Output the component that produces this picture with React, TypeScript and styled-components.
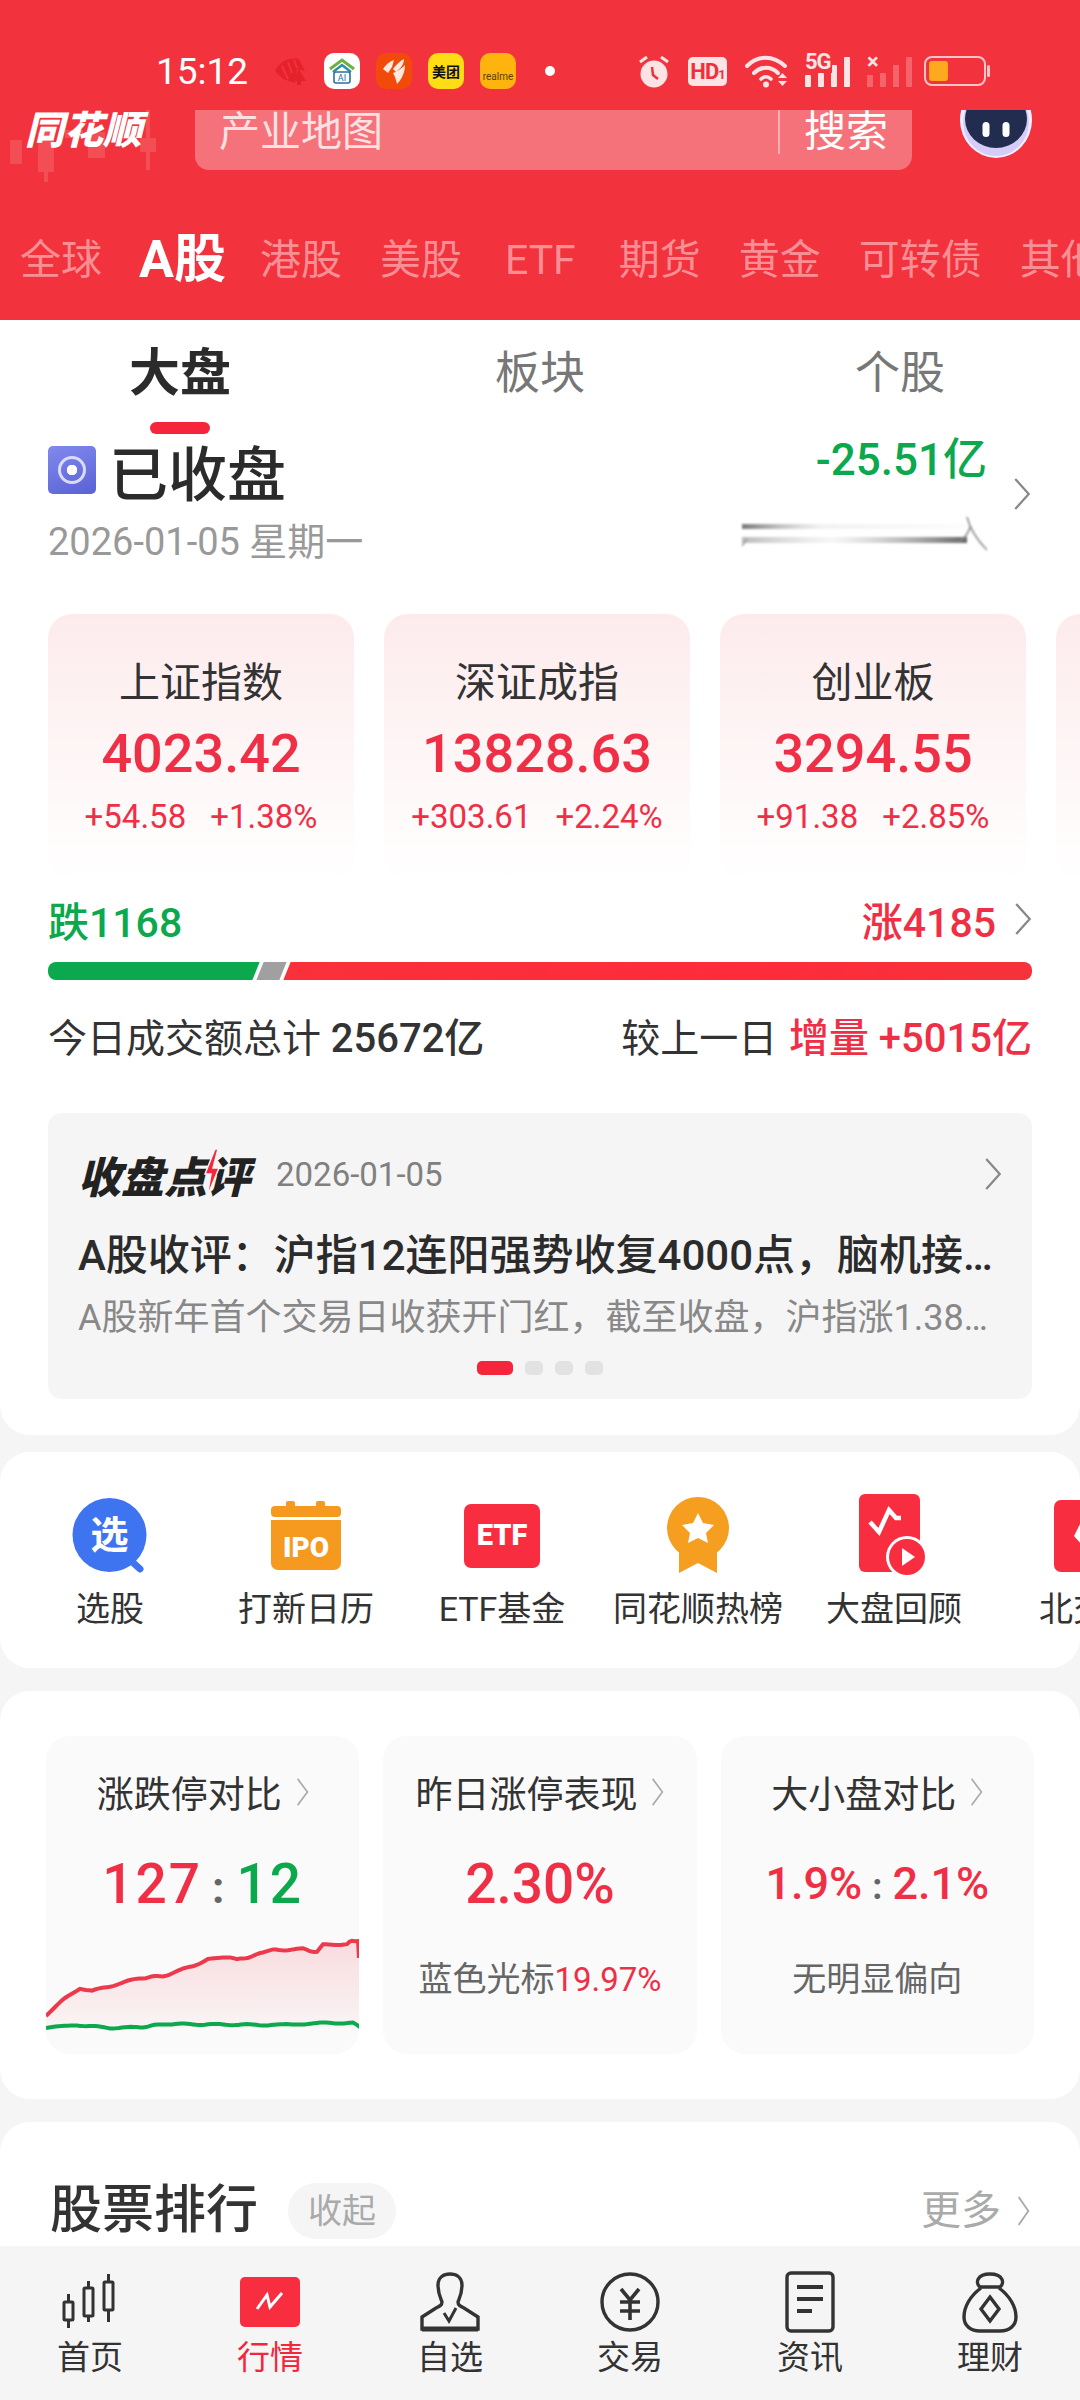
import React from "react";
import styled, { createGlobalStyle } from "styled-components";

const RED = "#EF2F45";
const GREEN = "#0CA84E";
const FONT = `Roboto, "Noto Sans CJK SC", sans-serif`;

const GlobalStyle = createGlobalStyle`
  html, body {
    margin: 0;
    padding: 0;
    background: #f5f5f5;
  }
  * {
    box-sizing: border-box;
  }
`;

// hand-tuned points of the two lines, the wobble is added on top
const wobble = (pts: number[][], amp: number) => {
  const out: string[] = [];
  for (let i = 0; i < pts.length - 1; i++) {
    const [x1, y1] = pts[i];
    const [x2, y2] = pts[i + 1];
    const steps = Math.max(1, Math.round((x2 - x1) / 3));
    for (let s = 0; s < steps; s++) {
      const t = s / steps;
      const n = Math.sin((x1 + t * (x2 - x1)) * 1.9) * amp;
      out.push(`${(x1 + t * (x2 - x1)).toFixed(1)},${(y1 + t * (y2 - y1) + n).toFixed(1)}`);
    }
  }
  const last = pts[pts.length - 1];
  out.push(`${last[0]},${last[1]}`);
  return out.join(" L");
};

const redLine = wobble(
  [[0, 80], [16, 65], [34, 52], [46, 55], [94, 42], [117, 40], [147, 30], [162, 23], [184, 22], [191, 24], [217, 17], [227, 14], [257, 13], [271, 16], [277, 9], [301, 8], [306, 5], [312, 5]],
  0.8
);
const greenLine = wobble(
  [[0, 92], [31, 89], [64, 92], [97, 91], [117, 88], [231, 89], [277, 87], [307, 87], [314, 91]],
  0.6
);

const Chevron: React.FC<{ w?: number; h?: number; color?: string }> = ({ w = 18, h = 32, color = "#888" }) => (
  <svg width={w} height={h} viewBox="0 0 16 30" fill="none" preserveAspectRatio="none" style={{ flexShrink: 0 }}>
    <polyline points="2,1 14,15 2,29" stroke={color} strokeWidth="2" />
  </svg>
);

const RedNotice = () => (
  <svg width="36" height="28" viewBox="0 0 34 28">
    <path d="M2 14 C6 5 16 0 26 2 L32 14 L24 12 L22 26 L10 22 L2 14Z" fill="#E5222C" />
    <path d="M9 9 L15 22 M15 5 L19 16 M21 3 L24 11" stroke="#F2323C" strokeWidth="2" />
    <path d="M26 12 L33 24 H28 V28 H24 V24 H19Z" fill="#E5222C" />
  </svg>
);

const HomeAi = () => (
  <svg width="28" height="28" viewBox="0 0 28 28" fill="none">
    <path d="M2 12 L14 3 L26 12" stroke="#6BB33C" strokeWidth="3" />
    <path d="M5 15 L14 8 L23 15" stroke="#2E8FA8" strokeWidth="2.5" />
    <rect x="6" y="15" width="16" height="11" rx="2" stroke="#2E6F9E" strokeWidth="1.6" />
    <text x="14" y="24" fontSize="9" fontFamily="Roboto" fill="#1F6FA8" textAnchor="middle">AI</text>
  </svg>
);

const Sail = () => (
  <svg width="26" height="28" viewBox="0 0 26 28" fill="#FFE9DF">
    <path d="M2 12 C6 6 10 4 13 3 L11 10 L7 16Z" />
    <path d="M12 12 C15 8 19 4 23 2 C23 7 20 11 15 15Z" />
    <path d="M12 16 C16 15 21 11 24 8 C24 15 21 22 16 27 C15 23 14 19 12 16Z" />
  </svg>
);

const Alarm = () => (
  <svg width="32" height="33" viewBox="0 0 32 33">
    <circle cx="16" cy="19" r="13.5" fill="#FDE3E4" />
    <path d="M2 7 L9 2 M30 7 L23 2" stroke="#FDE3E4" strokeWidth="3" />
    <path d="M14 12 L15 20 L20 24" stroke="#EF2F3A" strokeWidth="2.4" fill="none" />
  </svg>
);

const Wifi = () => (
  <svg width="46" height="33" viewBox="0 0 46 33" fill="none" stroke="#FDE3E4" strokeLinecap="round">
    <path d="M2 11 C13 0 28 0 40 11" strokeWidth="4" />
    <path d="M9 18 C16 11 26 11 33 18" strokeWidth="4" />
    <path d="M16 24 C19 21 23 21 26 24" strokeWidth="3.6" />
    <circle cx="21" cy="29.5" r="3" fill="#FDE3E4" stroke="none" />
    <path d="M33 23 L37.500 18 L42 23Z M33 26 L37.500 31 L42 26Z" fill="#FDE3E4" stroke="none" />
  </svg>
);

const SignalBars: React.FC<{ muted?: boolean }> = ({ muted }) => (
  <svg width="46" height="31" viewBox="0 0 46 31" fill="#FDE3E4" opacity={muted ? 0.28 : 1}>
    <rect x="0" y="19" width="6" height="12" rx="1" />
    <rect x="13" y="17" width="6" height="14" rx="1" />
    <rect x="26" y="9" width="6" height="22" rx="1" />
    <rect x="39" y="1" width="6" height="30" rx="1" />
  </svg>
);

const Robot = () => (
  <svg width="72" height="48" viewBox="0 0 72 48" style={{ display: "block" }}>
    <ellipse cx="36" cy="10" rx="36" ry="38" fill="#F3EEFF" />
    <ellipse cx="36" cy="12" rx="33" ry="34" fill="#C9BDF5" opacity="0.7" />
    <ellipse cx="36" cy="9" rx="31" ry="29" fill="#222C4F" />
    <rect x="22.500" y="12" width="7" height="15" rx="3.500" fill="#fff" />
    <rect x="42.500" y="12" width="7" height="15" rx="3.500" fill="#fff" />
  </svg>
);

const LogoCandles = () => (
  <svg width="170" height="80" viewBox="0 0 170 80" fill="#fff" opacity="0.13">
    <rect x="0" y="30" width="12" height="24" />
    <rect x="28" y="22" width="16" height="40" />
    <rect x="34" y="62" width="4" height="10" />
    <rect x="55" y="20" width="18" height="8" />
    <rect x="78" y="22" width="17" height="26" />
    <rect x="136" y="0" width="4" height="60" />
    <rect x="130" y="28" width="16" height="14" />
  </svg>
);

const PickIcon = () => (
  <svg width="76" height="76" viewBox="0 0 76 76">
    <path d="M56 60 L68 71" stroke="#3F74F0" strokeWidth="7" strokeLinecap="round" />
    <circle cx="37.500" cy="37" r="37" fill="#3F74F0" />
    <text x="37.500" y="50" fontSize="38" fontWeight="700" fontFamily='"Noto Sans CJK SC"' fill="#fff" textAnchor="middle">选</text>
  </svg>
);

const IpoIcon = () => (
  <svg width="70" height="70" viewBox="0 0 70 70">
    <rect x="15" y="0" width="9" height="8" rx="2" fill="#F59A1F" />
    <rect x="45" y="0" width="9" height="8" rx="2" fill="#F59A1F" />
    <rect x="0" y="5" width="70" height="11" rx="4" fill="#F59A1F" />
    <path d="M0 19 H70 V62 A7 7 0 0 1 63 69 H7 A7 7 0 0 1 0 62Z" fill="#F59A1F" />
    <text x="35" y="56" fontSize="28" fontWeight="900" fontFamily="Roboto" fill="#fff" textAnchor="middle">IPO</text>
  </svg>
);

const EtfIcon = () => (
  <svg width="76" height="64" viewBox="0 0 76 64">
    <rect width="76" height="64" rx="7" fill="#F92D40" />
    <text x="38" y="41" fontSize="29" fontWeight="900" fontFamily="Roboto" fill="#fff" textAnchor="middle">ETF</text>
  </svg>
);

const MedalIcon = () => (
  <svg width="62" height="78" viewBox="0 0 62 78">
    <path d="M12 50 V76 L31 66 L50 76 V50Z" fill="#F59E1F" />
    <circle cx="31" cy="31" r="31" fill="#F59E1F" />
    <path d="M31 16 L36 26 L47 28 L39 36 L41 46 L31 41 L21 46 L23 36 L15 28 L26 26Z" fill="#fff" />
  </svg>
);

const ReviewIcon = () => (
  <svg width="70" height="84" viewBox="0 0 70 84">
    <rect x="0" y="0" width="61" height="78" rx="6" fill="#F92D40" />
    <path d="M11 28 L20 38 L30 16 L37 24 L42 24" stroke="#fff" strokeWidth="4.500" fill="none" />
    <circle cx="48" cy="63" r="21" fill="#fff" />
    <circle cx="48" cy="63" r="18" fill="#F92D40" />
    <path d="M43 54 L56 63 L43 72Z" fill="#fff" />
  </svg>
);

const BseIcon = () => (
  <svg width="72" height="72" viewBox="0 0 72 72">
    <rect width="72" height="72" rx="7" fill="#F92D40" />
    <path d="M26 24 L50 24 L56 36 L38 56 L20 36Z" fill="#fff" />
  </svg>
);

const Bolt = () => (
  <svg width="16" height="48" viewBox="0 0 16 48">
    <path d="M11 0 L1 25 H7 L3 48 L15 19 H9 L14 0Z" fill="#F5263C" stroke="#f5f5f5" strokeWidth="1.500" />
  </svg>
);

const NavCandles = () => (
  <svg width="60" height="56" viewBox="0 0 60 56" fill="none" stroke="#333" strokeWidth="3">
    <rect x="4" y="28" width="9" height="18" rx="1" />
    <path d="M8.500 20 V28 M8.500 46 V54" />
    <rect x="24" y="14" width="9" height="28" rx="1" />
    <path d="M28.500 7 V14 M28.500 42 V48" />
    <rect x="44" y="8" width="9" height="28" rx="1" />
    <path d="M48.500 0 V8 M48.500 36 V48" />
  </svg>
);

const NavMarket = () => (
  <svg width="60" height="50" viewBox="0 0 60 50">
    <rect width="60" height="50" rx="5" fill="#F92D40" />
    <path d="M17 32 L27 18 L30 30 L42 16" stroke="#fff" strokeWidth="3" fill="none" />
  </svg>
);

const NavPerson = () => (
  <svg width="60" height="60" viewBox="0 0 60 60" fill="none" stroke="#333" strokeWidth="3.400">
    <path d="M18 13 C18 5 24 2 30 2 C36 2 42 5 42 13 C42 22 39 27 38 30 C38 33 40 34 44 36 L58 45 V57 H2 V45 L16 36 C20 34 22 33 22 30 C21 27 18 22 18 13Z" />
    <path d="M24 41 L29 49 L36 36" strokeWidth="3" />
    <path d="M2 57 H58" strokeWidth="5" />
  </svg>
);

const NavCoin = () => (
  <svg width="60" height="60" viewBox="0 0 60 60" fill="none" stroke="#333" strokeWidth="3.400">
    <circle cx="30" cy="30" r="28" />
    <path d="M21 17 L30 28 L39 17 M20 30 H40 M20 39 H40 M30 28 V48" strokeWidth="3.600" />
  </svg>
);

const NavNews = () => (
  <svg width="50" height="62" viewBox="0 0 50 62" fill="none" stroke="#333" strokeWidth="3.400">
    <rect x="2" y="2" width="46" height="58" rx="4" />
    <path d="M12 16 H38 M12 28 H38 M12 40 H27" strokeWidth="3.800" />
  </svg>
);

const NavBag = () => (
  <svg width="56" height="62" viewBox="0 0 56 62" fill="none" stroke="#333" strokeWidth="3.400">
    <path d="M18 16 C13 12 15 3 28 3 C41 3 43 12 38 16 Z" />
    <path d="M19 17 C8 25 2 36 2 46 C2 55 9 60 18 60 H38 C47 60 54 55 54 46 C54 36 48 25 37 17" />
    <path d="M28 26 L37 38 L28 50 L19 38Z" />
  </svg>
);

const tabs = ["全球", "A股", "港股", "美股", "ETF", "期货", "黄金", "可转债", "其他"];

const indexes = [
  { name: "上证指数", value: "4023.42", diff: "+54.58", pct: "+1.38%" },
  { name: "深证成指", value: "13828.63", diff: "+303.61", pct: "+2.24%" },
  { name: "创业板", value: "3294.55", diff: "+91.38", pct: "+2.85%" },
];

const tools = [
  { label: "选股", icon: <PickIcon /> },
  { label: "打新日历", icon: <IpoIcon /> },
  { label: "ETF基金", icon: <EtfIcon /> },
  { label: "同花顺热榜", icon: <MedalIcon /> },
  { label: "大盘回顾", icon: <ReviewIcon /> },
  { label: "北交所", icon: <BseIcon /> },
];

const navItems = [
  { label: "首页", icon: <NavCandles /> },
  { label: "行情", icon: <NavMarket />, active: true },
  { label: "自选", icon: <NavPerson /> },
  { label: "交易", icon: <NavCoin /> },
  { label: "资讯", icon: <NavNews /> },
  { label: "理财", icon: <NavBag /> },
];

export default function App() {
  return (
    <Page>
      <GlobalStyle />
      <Header>
        <StatusBar>
          <Clock>15:12</Clock>
          <NoticeGroup>
            <RedNotice />
            <AppBadge $bg="#fff"><HomeAi /></AppBadge>
            <AppBadge $bg="#F24A0A"><Sail /></AppBadge>
            <AppBadge $bg="#FFDD14"><MeituanText>美团</MeituanText></AppBadge>
            <AppBadge $bg="#FFB30F"><RealmeText>realme</RealmeText></AppBadge>
            <NoticeDot />
          </NoticeGroup>
          <SystemGroup>
            <Alarm />
            <HdBadge>HD<small>1</small></HdBadge>
            <Wifi />
            <SignalWrap>
              <SignalLabel>5G</SignalLabel>
              <SignalBars />
            </SignalWrap>
            <SignalWrap>
              <SignalLabel>×</SignalLabel>
              <SignalBars muted />
            </SignalWrap>
            <Battery>
              <BatteryFill />
            </Battery>
          </SystemGroup>
        </StatusBar>
        <SearchRow>
          <Logo>
            <CandleLayer><LogoCandles /></CandleLayer>
            <LogoText>同花顺</LogoText>
          </Logo>
          <SearchBox>
            <SearchHint>产业地图</SearchHint>
            <SearchButton>搜索</SearchButton>
          </SearchBox>
          <RobotSlot><Robot /></RobotSlot>
        </SearchRow>
        <MarketTabs>
          {tabs.map((t) => (
            <MarketTab key={t} $active={t === "A股"} $wide={t === "ETF"}>{t}</MarketTab>
          ))}
        </MarketTabs>
      </Header>

      <Scroll>
        <Card $bottomOnly>
          <SubTabs>
            <SubTab $active>大盘</SubTab>
            <SubTab>板块</SubTab>
            <SubTab>个股</SubTab>
          </SubTabs>
          <MarketState>
            <div>
              <StateLine>
                <StateIcon><StateDot /></StateIcon>
                <StateText>已收盘</StateText>
              </StateLine>
              <StateDate>2026-01-05 星期一</StateDate>
            </div>
            <FlowBlock>
              <div>
                <FlowValue>-25.51亿</FlowValue>
                <BlurredLine width="245" height="36" viewBox="0 0 245 36" fill="none">
                  <defs>
                    <linearGradient id="fadeA" x1="0" x2="1">
                      <stop offset="0" stopColor="#777" />
                      <stop offset="0.35" stopColor="#ddd" stopOpacity="0.4" />
                      <stop offset="1" stopColor="#eee" stopOpacity="0.2" />
                    </linearGradient>
                    <linearGradient id="fadeB" x1="0" x2="1">
                      <stop offset="0" stopColor="#bbb" />
                      <stop offset="0.4" stopColor="#eee" stopOpacity="0.5" />
                      <stop offset="1" stopColor="#666" />
                    </linearGradient>
                  </defs>
                  <rect x="0" y="9" width="225" height="5" fill="url(#fadeA)" />
                  <rect x="0" y="22" width="225" height="6" fill="url(#fadeB)" />
                  <path d="M0 31 L5 24" stroke="#999" strokeWidth="1.500" />
                  <path d="M225 2 C228 14 236 26 245 35 M228 12 C226 20 222 24 216 28" stroke="#888" strokeWidth="1.500" />
                </BlurredLine>
              </div>
              <Chevron />
            </FlowBlock>
          </MarketState>

          <IndexStrip>
            {indexes.map((i) => (
              <IndexCard key={i.name}>
                <IndexName>{i.name}</IndexName>
                <IndexValue>{i.value}</IndexValue>
                <IndexDiff>
                  <span>{i.diff}</span>
                  <span>{i.pct}</span>
                </IndexDiff>
              </IndexCard>
            ))}
            <IndexCard />
          </IndexStrip>

          <Breadth>
            <BreadthText $color={GREEN}>跌1168</BreadthText>
            <BreadthRight>
              <BreadthText $color={RED}>涨4185</BreadthText>
              <Chevron />
            </BreadthRight>
          </Breadth>
          <BreadthBar>
            <BarPart $width={218} $bg={GREEN} />
            <BarPart $width={23} $bg="#A0A0A0" />
            <BarPart $bg="linear-gradient(90deg, #F9303A, #FF2B3A 60%, #F5323A)" />
          </BreadthBar>

          <Turnover>
            <TurnoverText>今日成交额总计 <b>25672亿</b></TurnoverText>
            <TurnoverText>较上一日 <RedBold>增量 +5015亿</RedBold></TurnoverText>
          </Turnover>

          <Review>
            <ReviewHead>
              <ReviewTitle>
                收盘点
                <BoltChar>
                  评
                  <BoltMark><Bolt /></BoltMark>
                </BoltChar>
              </ReviewTitle>
              <ReviewDate>2026-01-05</ReviewDate>
              <ReviewArrow><Chevron /></ReviewArrow>
            </ReviewHead>
            <ReviewLine>A股收评：沪指12连阳强势收复4000点，脑机接口概念爆发</ReviewLine>
            <ReviewSub>A股新年首个交易日收获开门红，截至收盘，沪指涨1.38%，深成指涨2.24%</ReviewSub>
            <Pager>
              <PagerDot $active />
              <PagerDot />
              <PagerDot />
              <PagerDot />
            </Pager>
          </Review>
        </Card>

        <ToolCard>
          {tools.map((t) => (
            <Tool key={t.label}>
              <ToolIcon>{t.icon}</ToolIcon>
              <ToolLabel>{t.label}</ToolLabel>
            </Tool>
          ))}
        </ToolCard>

        <StatsCard>
          <Stat>
            <StatTitle>涨跌停对比<Chevron w={13} h={28} color="#aaa" /></StatTitle>
            <StatValue $spaced>127<Colon>:</Colon><GreenText>12</GreenText></StatValue>
            <ChartSvg width="314" height="118" viewBox="0 0 314 118" fill="none">
              <defs>
                <linearGradient id="area" x1="0" x2="0" y1="0" y2="1">
                  <stop offset="0" stopColor="#F03A4A" stopOpacity="0.16" />
                  <stop offset="1" stopColor="#F03A4A" stopOpacity="0.03" />
                </linearGradient>
              </defs>
              <path d={`M${redLine} L314 22 V92 H0Z`} fill="url(#area)" />
              <path d={`M${redLine} L313 22`} stroke="#EC3A4C" strokeWidth="4" />
              <path d={`M${greenLine}`} stroke={GREEN} strokeWidth="4" />
            </ChartSvg>
          </Stat>
          <Stat>
            <StatTitle>昨日涨停表现<Chevron w={13} h={28} color="#aaa" /></StatTitle>
            <StatValue>2.30%</StatValue>
            <StatFoot>蓝色光标<StatFootRed>19.97%</StatFootRed></StatFoot>
          </Stat>
          <Stat>
            <StatTitle>大小盘对比<Chevron w={13} h={28} color="#aaa" /></StatTitle>
            <StatValue $small>1.9%<Colon>:</Colon>2.1%</StatValue>
            <StatFoot>无明显偏向</StatFoot>
          </Stat>
        </StatsCard>

        <RankCard>
          <RankTitle>股票排行</RankTitle>
          <CollapsePill>收起</CollapsePill>
          <RankMore>
            更多
            <Chevron w={13} h={30} color="#aaa" />
          </RankMore>
        </RankCard>
      </Scroll>

      <BottomNav>
        {navItems.map((n) => (
          <NavItem key={n.label} $active={n.active}>
            <NavIcon>{n.icon}</NavIcon>
            <span>{n.label}</span>
          </NavItem>
        ))}
      </BottomNav>
    </Page>
  );
}

const Page = styled.div`
  width: 1080px;
  height: 2400px;
  display: flex;
  flex-direction: column;
  overflow: hidden;
  background: #f5f5f5;
  font-family: ${FONT};
  color: #333;
`;

const Header = styled.header`
  height: 320px;
  background: #f2323c;
  flex-shrink: 0;
`;

const StatusBar = styled.div`
  height: 110px;
  padding: 32px 90px 0 156px;
  display: flex;
  align-items: center;
`;

const Clock = styled.div`
  font-size: 37px;
  color: #fff;
  width: 116px;
`;

const NoticeGroup = styled.div`
  display: flex;
  align-items: center;
  gap: 16px;
`;

const AppBadge = styled.div<{ $bg: string }>`
  width: 36px;
  height: 36px;
  border-radius: 10px;
  background: ${({ $bg }) => $bg};
  display: flex;
  align-items: center;
  justify-content: center;
  overflow: hidden;
`;

const MeituanText = styled.span`
  font-size: 14px;
  font-weight: 700;
  color: #111;
  white-space: nowrap;
`;

const RealmeText = styled.span`
  font-size: 10px;
  color: #5a3c00;
  margin-top: 10px;
`;

const NoticeDot = styled.div`
  width: 10px;
  height: 10px;
  border-radius: 50%;
  background: #fff;
  margin-left: 13px;
`;

const SystemGroup = styled.div`
  margin-left: auto;
  display: flex;
  align-items: center;
  gap: 14px;
`;

const HdBadge = styled.div`
  width: 39px;
  height: 29px;
  background: #fde3e4;
  border-radius: 5px;
  color: #ef2f3a;
  font-size: 22px;
  font-weight: 700;
  line-height: 29px;
  text-align: center;
  letter-spacing: -1px;
  margin: 0 4px;
  small {
    font-size: 13px;
  }
`;

const SignalWrap = styled.div`
  position: relative;
  width: 48px;
  height: 31px;
`;

const SignalLabel = styled.span`
  position: absolute;
  left: 0;
  top: -5px;
  font-size: 22px;
  font-weight: 700;
  line-height: 22px;
  letter-spacing: -1px;
  color: #fde3e4;
  background: #f2323c;
  padding-right: 1px;
  z-index: 1;
`;

const Battery = styled.div`
  width: 62px;
  height: 30px;
  border: 2px solid #fbc5c8;
  border-radius: 8px;
  padding: 3px;
  position: relative;
  margin: 0 4px 0 -5px;
  &::after {
    content: "";
    position: absolute;
    right: -6px;
    top: 7px;
    width: 3px;
    height: 12px;
    background: #fbc5c8;
    border-radius: 2px;
  }
`;

const BatteryFill = styled.div`
  width: 19px;
  height: 100%;
  border-radius: 3px;
  background: #ffa91f;
`;

const SearchRow = styled.div`
  height: 60px;
  display: flex;
  align-items: flex-start;
  padding-left: 28px;
`;

const Logo = styled.div`
  width: 167px;
  position: relative;
`;

const CandleLayer = styled.div`
  position: absolute;
  left: -18px;
  top: 0;
`;

const LogoText = styled.div`
  position: relative;
  left: -3px;
  font-size: 39px;
  line-height: 42px;
  font-weight: 900;
  font-style: italic;
  color: #fff;
  white-space: nowrap;
`;

const SearchBox = styled.div`
  width: 717px;
  height: 60px;
  background: #f6727a;
  border-radius: 0 0 14px 14px;
  display: flex;
  align-items: flex-start;
  padding: 0 24px;
`;

const SearchHint = styled.div`
  flex: 1;
  font-size: 41px;
  line-height: 44px;
  color: #fde0e2;
`;

const SearchButton = styled.div`
  font-size: 42px;
  line-height: 44px;
  color: #fff;
  padding-left: 24px;
  border-left: 2px solid #fbb0b5;
`;

const RobotSlot = styled.div`
  margin-left: 48px;
`;

const MarketTabs = styled.div`
  height: 60px;
  margin-top: 60px;
  padding-left: 20px;
  display: flex;
  align-items: center;
  gap: 38px;
  white-space: nowrap;
  overflow: hidden;
`;

const MarketTab = styled.div<{ $active?: boolean; $wide?: boolean }>`
  flex-shrink: 0;
  line-height: 60px;
  font-size: ${({ $active }) => ($active ? "52px" : "41px")};
  font-weight: ${({ $active }) => ($active ? 700 : 400)};
  margin: ${({ $active }) => ($active ? "0 -4px 0 -1px" : "0")};
  padding: ${({ $wide }) => ($wide ? "0 5px" : "0")};
  color: ${({ $active }) => ($active ? "#fff" : "#F98F94")};
`;

const Scroll = styled.main`
  flex: 1;
  min-height: 0;
  overflow: hidden;
  display: flex;
  flex-direction: column;
  gap: 17px;
`;

const Card = styled.section<{ $bottomOnly?: boolean }>`
  background: #fff;
  border-radius: ${({ $bottomOnly }) => ($bottomOnly ? "0 0 30px 30px" : "30px")};
  flex-shrink: 0;
`;

const SubTabs = styled.div`
  height: 104px;
  display: grid;
  grid-template-columns: repeat(3, 360px);
  align-items: center;
  padding-top: 4px;
`;

const SubTab = styled.div<{ $active?: boolean }>`
  position: relative;
  text-align: center;
  font-size: ${({ $active }) => ($active ? "51px" : "45px")};
  font-weight: ${({ $active }) => ($active ? 700 : 400)};
  color: ${({ $active }) => ($active ? "#2b2b2b" : "#777")};
  line-height: 60px;
  ${({ $active }) =>
    $active &&
    `&::after {
      content: "";
      position: absolute;
      left: 150px;
      top: 78px;
      width: 60px;
      height: 12px;
      border-radius: 6px;
      background: #f5263c;
    }`}
`;

const MarketState = styled.div`
  height: 190px;
  padding: 12px 48px 0;
  display: flex;
  justify-content: space-between;
  align-items: flex-start;
`;

const StateLine = styled.div`
  display: flex;
  align-items: center;
  gap: 13px;
  height: 68px;
`;

const StateIcon = styled.div`
  width: 48px;
  height: 48px;
  border-radius: 5px;
  background: linear-gradient(160deg, #8189ee, #5a62d4);
  display: flex;
  align-items: center;
  justify-content: center;
`;

const StateDot = styled.div`
  width: 28px;
  height: 28px;
  border-radius: 50%;
  border: 3px solid #d8dbfa;
  background: radial-gradient(circle, #fff 0 5px, transparent 5.500px);
`;

const StateText = styled.div`
  font-size: 59px;
  font-weight: 500;
  color: #2b2b2b;
`;

const StateDate = styled.div`
  font-size: 38px;
  color: #999;
  margin-top: 18px;
  line-height: 40px;
`;

const FlowBlock = styled.div`
  display: flex;
  align-items: center;
  margin-right: -46px;
  gap: 26px;
  padding-right: 47px;
`;

const FlowValue = styled.div`
  font-size: 44px;
  font-weight: 500;
  color: ${GREEN};
  text-align: right;
  line-height: 48px;
  margin-bottom: 31px;
`;

const BlurredLine = styled.svg`
  display: block;
  filter: blur(1.2px);
`;

const IndexStrip = styled.div`
  display: flex;
  gap: 30px;
  padding-left: 48px;
  overflow: hidden;
`;

const IndexCard = styled.div`
  flex: 0 0 306px;
  height: 266px;
  border-radius: 24px;
  background: linear-gradient(180deg, #fdebec 0%, #ffffff 100%);
  padding-top: 43px;
  text-align: center;
`;

const IndexName = styled.div`
  font-size: 41px;
  line-height: 52px;
  color: #333;
`;

const IndexValue = styled.div`
  font-size: 54px;
  font-weight: 500;
  line-height: 64px;
  margin-top: 13px;
  color: ${RED};
`;

const IndexDiff = styled.div`
  display: flex;
  justify-content: center;
  gap: 24px;
  margin-top: 10px;
  font-size: 33px;
  line-height: 42px;
  color: ${RED};
`;

const Breadth = styled.div`
  height: 56px;
  margin-top: 11px;
  padding: 0 48px;
  display: flex;
  justify-content: space-between;
  align-items: center;
`;

const BreadthRight = styled.div`
  display: flex;
  align-items: center;
  gap: 18px;
`;

const BreadthText = styled.div<{ $color: string }>`
  font-size: 41px;
  font-weight: 500;
  color: ${({ $color }) => $color};
`;

const BreadthBar = styled.div`
  height: 18px;
  margin: 15px 48px 0;
  border-radius: 8px;
  overflow: hidden;
  display: flex;
  gap: 4px;
`;

const BarPart = styled.div<{ $width?: number; $bg: string }>`
  flex: ${({ $width }) => ($width ? `0 0 ${$width}px` : 1)};
  background: ${({ $bg }) => $bg};
  transform: skewX(-22deg);
  &:first-child {
    margin-left: -10px;
  }
  &:last-child {
    margin-right: -10px;
  }
`;

const Turnover = styled.div`
  height: 60px;
  margin-top: 25px;
  padding: 0 48px;
  display: flex;
  justify-content: space-between;
  align-items: center;
`;

const TurnoverText = styled.div`
  font-size: 39px;
  color: #333;
  white-space: nowrap;
  b {
    font-weight: 500;
    font-size: 40px;
  }
`;

const RedBold = styled.span`
  color: ${RED};
  font-weight: 500;
  font-size: 40px;
  margin-left: 2px;
`;

const Review = styled.div`
  margin: 48px 48px 36px;
  height: 286px;
  background: #f5f5f5;
  border-radius: 14px;
  padding: 31px 30px 0;
`;

const ReviewHead = styled.div`
  display: flex;
  align-items: center;
  height: 60px;
`;

const ReviewTitle = styled.div`
  font-size: 43px;
  font-weight: 900;
  font-style: italic;
  color: #222;
  white-space: nowrap;
`;

const BoltChar = styled.span`
  position: relative;
  display: inline-block;
`;

const BoltMark = styled.span`
  position: absolute;
  left: -3px;
  top: 6px;
  display: flex;
`;

const ReviewDate = styled.div`
  font-size: 33px;
  color: #808080;
  margin-left: 26px;
`;

const ReviewArrow = styled.div`
  margin-left: auto;
  display: flex;
`;

const ReviewLine = styled.div`
  font-size: 42px;
  font-weight: 500;
  line-height: 52px;
  margin-top: 26px;
  color: #2b2b2b;
  white-space: nowrap;
  overflow: hidden;
  text-overflow: ellipsis;
`;

const ReviewSub = styled.div`
  font-size: 36px;
  line-height: 46px;
  margin-top: 13px;
  color: #888;
  white-space: nowrap;
  overflow: hidden;
  text-overflow: ellipsis;
`;

const Pager = styled.div`
  margin-top: 20px;
  display: flex;
  justify-content: center;
  gap: 12px;
`;

const PagerDot = styled.div<{ $active?: boolean }>`
  width: ${({ $active }) => ($active ? "36px" : "18px")};
  height: 14px;
  border-radius: 5px;
  background: ${({ $active }) => ($active ? "#F5263C" : "#e2e2e2")};
`;

const ToolCard = styled(Card)`
  height: 216px;
  padding: 45px 0 0 12px;
  display: flex;
  overflow: hidden;
`;

const Tool = styled.div`
  flex: 0 0 196px;
  display: flex;
  flex-direction: column;
  align-items: center;
`;

const ToolIcon = styled.div`
  height: 78px;
  display: flex;
  align-items: center;
  justify-content: center;
`;

const ToolLabel = styled.div`
  margin-top: 12px;
  font-size: 34px;
  line-height: 44px;
  color: #333;
  white-space: nowrap;
`;

const StatsCard = styled(Card)`
  height: 408px;
  margin-top: 6px;
  padding: 45px 46px 0;
  display: flex;
  gap: 24px;
`;

const Stat = styled.div`
  flex: 1;
  height: 318px;
  background: #fafafa;
  border-radius: 24px;
  overflow: hidden;
  text-align: center;
  display: flex;
  flex-direction: column;
`;

const StatTitle = styled.div`
  margin-top: 31px;
  height: 50px;
  display: flex;
  justify-content: center;
  align-items: center;
  gap: 14px;
  font-size: 37px;
  color: #333;
  white-space: nowrap;
`;

const StatValue = styled.div<{ $small?: boolean; $spaced?: boolean }>`
  height: 64px;
  margin-top: 35px;
  line-height: 64px;
  font-size: ${({ $small }) => ($small ? "45px" : "55px")};
  font-weight: 500;
  letter-spacing: ${({ $spaced }) => ($spaced ? "2px" : "0")};
  color: ${RED};
  white-space: nowrap;
`;

const Colon = styled.span`
  color: #666;
  font-size: 0.8em;
  font-weight: 700;
  margin: 0 10px;
`;

const GreenText = styled.span`
  color: ${GREEN};
`;

const ChartSvg = styled.svg`
  position: relative;
  display: block;
  margin-top: auto;
  flex-shrink: 0;
`;

const StatFoot = styled.div`
  margin-top: 40px;
  font-size: 34px;
  line-height: 46px;
  color: #666;
  white-space: nowrap;
`;

const StatFootRed = styled.span`
  font-size: 33px;
  color: ${RED};
`;

const RankCard = styled(Card)`
  height: 200px;
  margin-top: 6px;
  padding: 61px 50px 0;
  display: flex;
  align-items: flex-start;
`;

const RankTitle = styled.div`
  font-size: 52px;
  line-height: 56px;
  font-weight: 500;
  color: #333;
`;

const CollapsePill = styled.div`
  margin-left: 30px;
  width: 108px;
  height: 56px;
  border-radius: 28px;
  background: #f5f5f5;
  font-size: 34px;
  line-height: 56px;
  text-align: center;
  color: #aaa;
`;

const RankMore = styled.div`
  margin-left: auto;
  display: flex;
  align-items: center;
  gap: 16px;
  font-size: 40px;
  line-height: 56px;
  color: #aaa;
`;

const BottomNav = styled.nav`
  height: 154px;
  flex-shrink: 0;
  background: #f5f5f5;
  position: relative;
  display: grid;
  grid-template-columns: repeat(6, 180px);
  padding-top: 24px;
`;

const NavItem = styled.div<{ $active?: boolean }>`
  display: flex;
  flex-direction: column;
  align-items: center;
  font-size: 33px;
  line-height: 44px;
  color: ${({ $active }) => ($active ? "#F5263C" : "#333")};
`;

const NavIcon = styled.div`
  height: 64px;
  margin-bottom: 2px;
  display: flex;
  align-items: center;
  justify-content: center;
`;
